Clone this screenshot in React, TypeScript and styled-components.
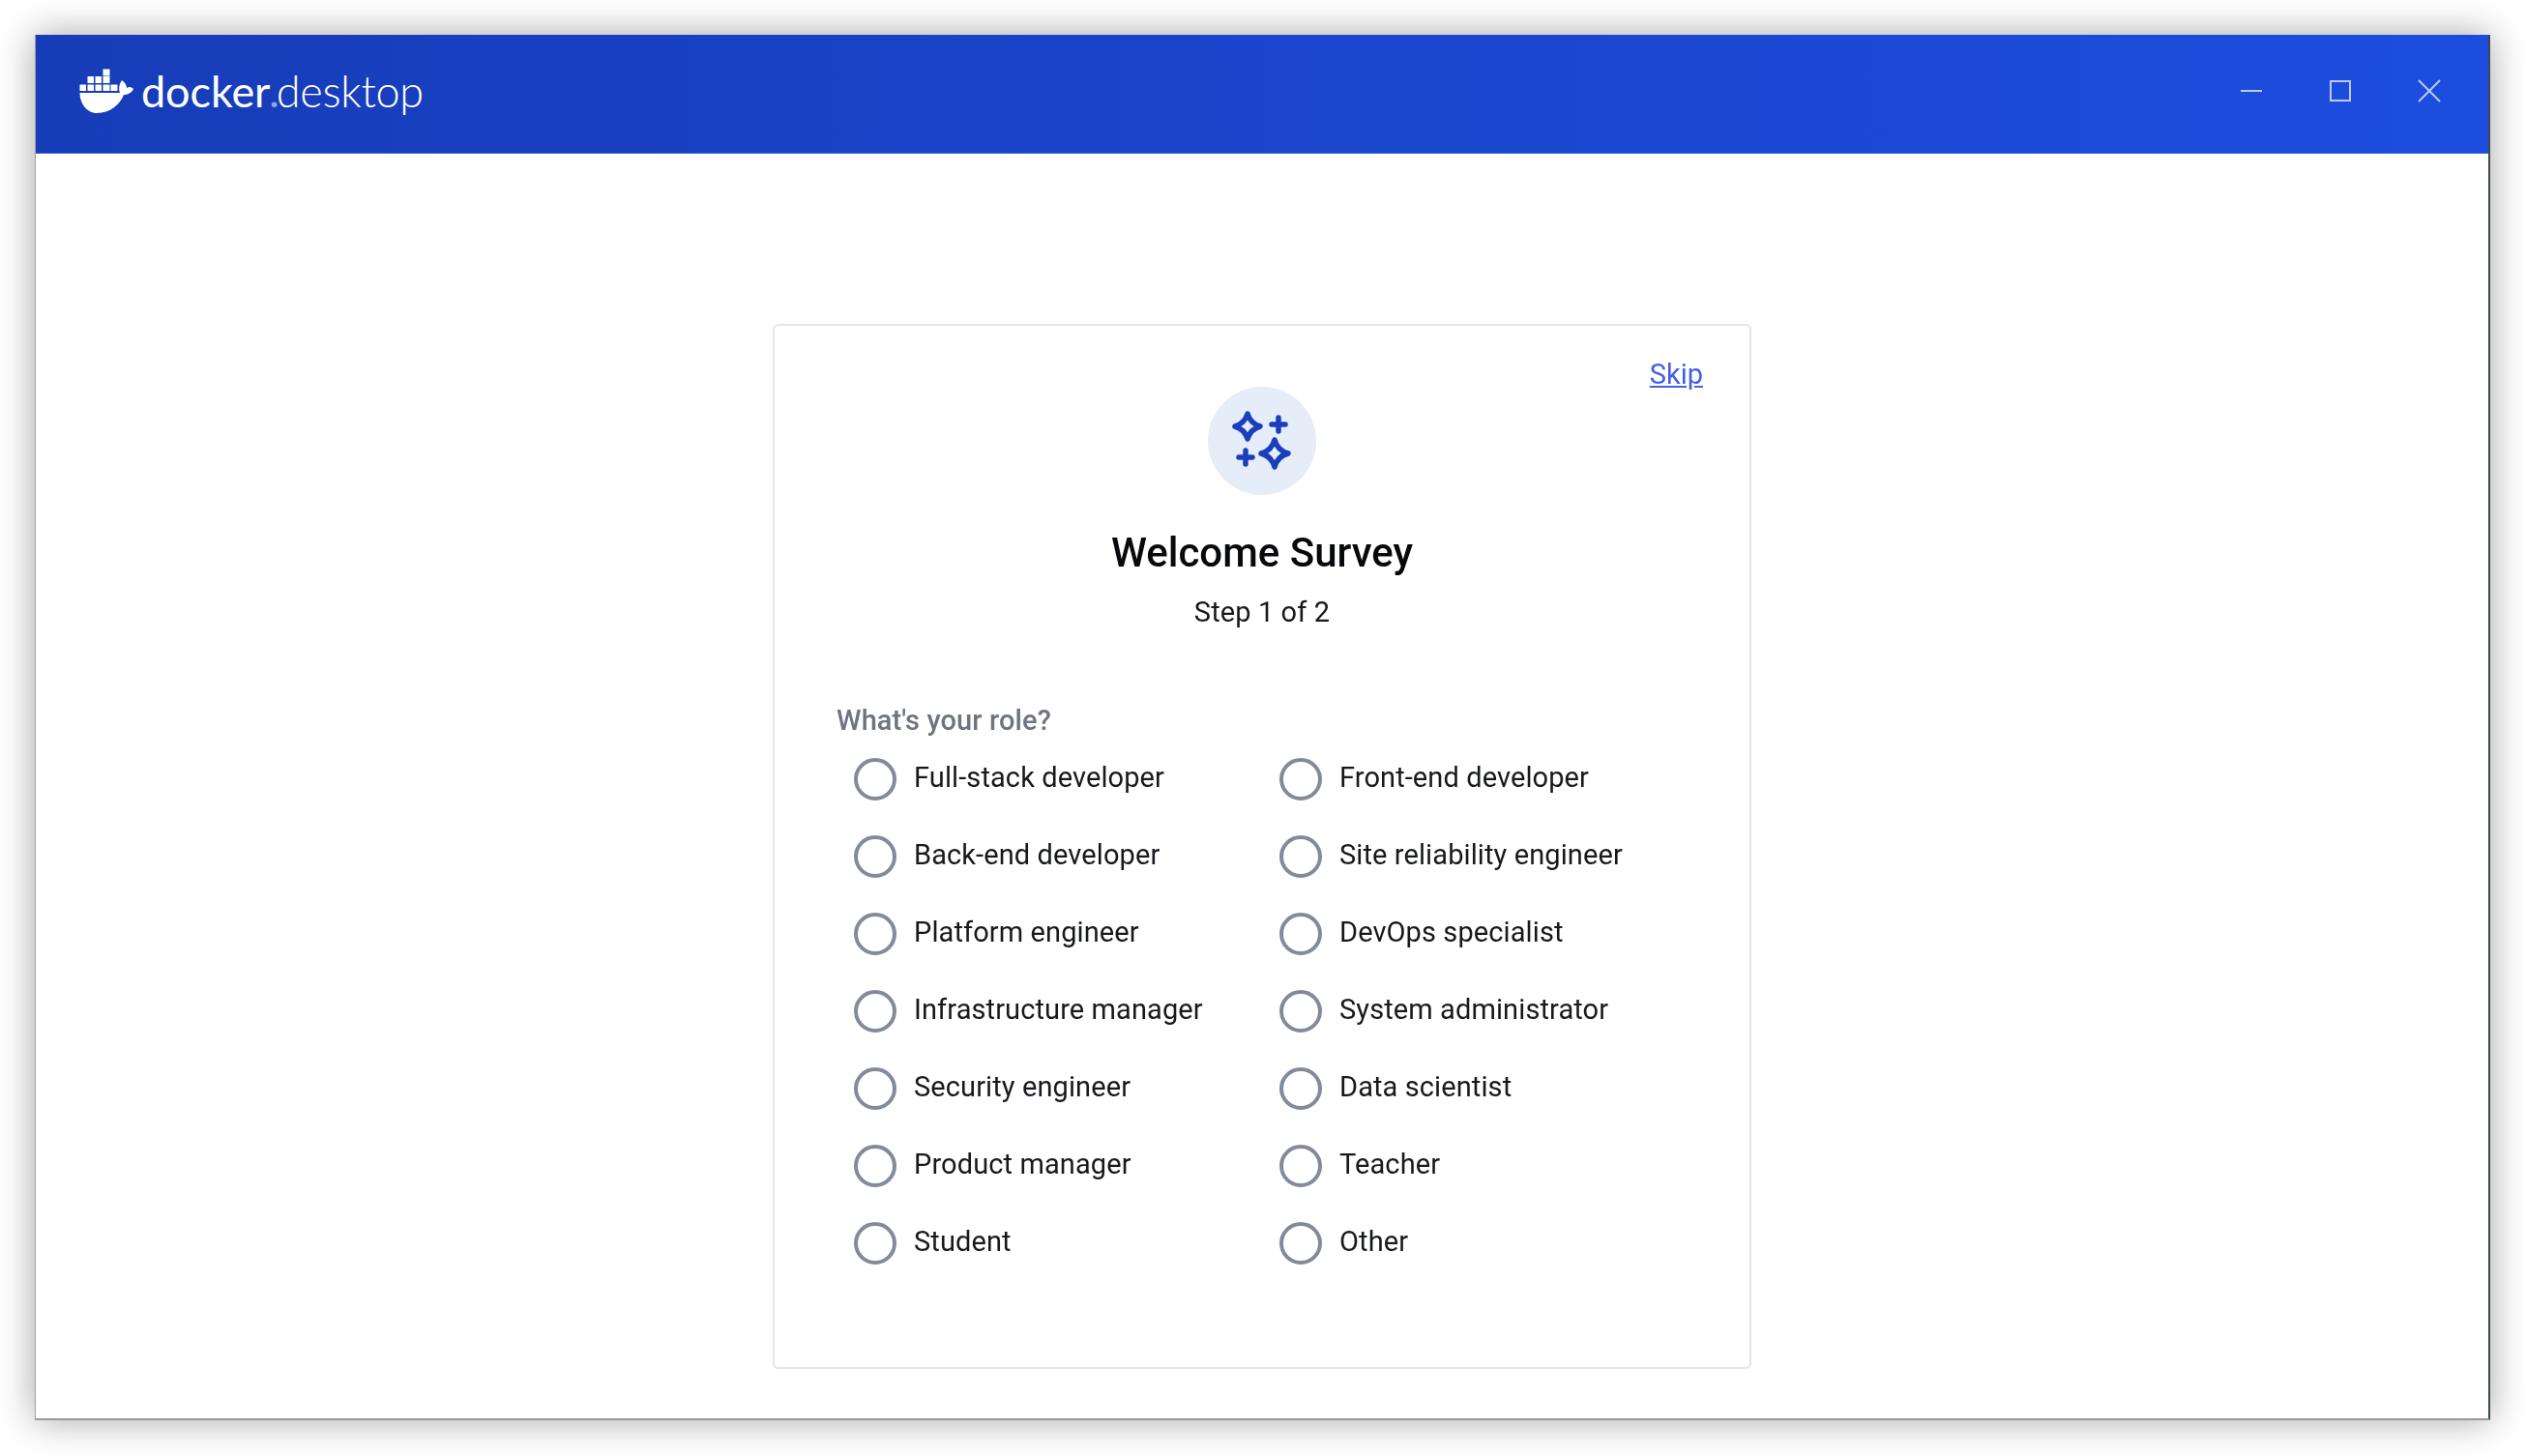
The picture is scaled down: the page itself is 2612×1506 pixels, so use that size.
import React from 'react';
import styled, { createGlobalStyle } from 'styled-components';

const GlobalStyle = createGlobalStyle`
  html, body {
    margin: 0;
    background: #fff;
    font-family: Roboto, "Liberation Sans", sans-serif;
  }
`;

const Page = styled.div`
  width: 2612px;
  height: 1506px;
  padding: 36px 37px 37px 36px;
  box-sizing: border-box;
  overflow: hidden;
`;

const AppWindow = styled.div`
  height: 100%;
  display: flex;
  flex-direction: column;
  box-sizing: border-box;
  background: #fff;
  border-left: 1px solid #a2a29d;
  border-right: 2px solid #3d4a4e;
  border-bottom: 2px solid #9a9a98;
  box-shadow: 0 0 36px rgba(0, 0, 0, 0.36);
  filter: blur(0.45px);
`;

const TitleBar = styled.header`
  height: 123px;
  box-sizing: border-box;
  flex: none;
  display: flex;
  align-items: center;
  justify-content: space-between;
  padding: 0 15px 6px 43px;
  background: linear-gradient(90deg, #173cb8 0%, #1d4ddf 100%);
  border-bottom: 1px solid #3f63d8;
`;

const Logo = styled.div`
  display: flex;
  align-items: center;
  gap: 6px;
  color: #fff;
`;

const Wordmark = styled.div`
  display: flex;
  align-items: baseline;
  font-family: Lato, sans-serif;
  font-size: 45px;
  line-height: 50px;
  letter-spacing: -0.1px;
`;

const WordDot = styled.span`
  color: #8ea6ee;
  margin: 0 -3px 0 -1px;
`;

const WordLight = styled.span`
  font-weight: 300;
  letter-spacing: -0.3px;
`;

const WindowControls = styled.div`
  display: flex;
`;

const ControlButton = styled.button`
  width: 92px;
  height: 40px;
  padding: 0;
  display: flex;
  align-items: center;
  justify-content: center;
  background: none;
  border: 0;
  color: #b9caf6;
`;

const Main = styled.main`
  flex: 1;
  display: flex;
  justify-content: center;
  padding-top: 176px;
`;

const Card = styled.section`
  position: relative;
  width: 1012px;
  height: 1081px;
  box-sizing: border-box;
  padding: 63px 64px 0;
  display: flex;
  flex-direction: column;
  align-items: center;
  border: 2px solid #e4e5ea;
  border-radius: 6px;
`;

const SkipLink = styled.a`
  position: absolute;
  top: 30px;
  right: 48px;
  font-size: 29px;
  line-height: 40px;
  color: #4560e2;
  text-decoration: underline;
`;

const IconCircle = styled.div`
  width: 112px;
  height: 112px;
  border-radius: 50%;
  background: #e5edf9;
  color: #1a3fbd;
  flex: none;
`;

const Title = styled.h1`
  margin: 36px 0 0;
  font-size: 42px;
  line-height: 48px;
  font-weight: 500;
  color: #08090c;
`;

const Step = styled.p`
  margin: 17px 0 0;
  font-size: 29px;
  line-height: 40px;
  letter-spacing: 0.1px;
  color: #17191e;
`;

const RoleLabel = styled.div`
  align-self: stretch;
  margin-top: 72px;
  font-size: 29px;
  line-height: 40px;
  font-weight: 500;
  letter-spacing: 0.1px;
  color: #6f7480;
`;

const RoleGrid = styled.div`
  align-self: stretch;
  margin-top: 18px;
  padding-left: 18px;
  display: grid;
  grid-template-columns: 440px 1fr;
  grid-auto-rows: 80px;
`;

const RoleOption = styled.label`
  display: flex;
  align-items: center;
  gap: 18px;
  height: 44px;
  font-size: 29px;
  line-height: 40px;
  letter-spacing: 0.1px;
  color: #17191e;
`;

const RadioMark = styled.span`
  width: 44px;
  height: 44px;
  box-sizing: border-box;
  flex: none;
  border: 4.5px solid #828b9c;
  border-radius: 50%;
  margin-top: 2px;
`;

const OptionText = styled.span`
  margin-top: -2px;
`;

const roles = [
  'Full-stack developer',
  'Front-end developer',
  'Back-end developer',
  'Site reliability engineer',
  'Platform engineer',
  'DevOps specialist',
  'Infrastructure manager',
  'System administrator',
  'Security engineer',
  'Data scientist',
  'Product manager',
  'Teacher',
  'Student',
  'Other',
];

function DockerWhale() {
  return (
    <svg width="60" height="50" viewBox="80 68 60 50" fill="currentColor">
      <rect x="106.5" y="70.5" width="7" height="7" />
      <rect x="90.5" y="78" width="6.5" height="7" />
      <rect x="98.5" y="78" width="6.5" height="7" />
      <rect x="106.5" y="78" width="7" height="7" />
      <rect x="82.5" y="86.5" width="6.5" height="6.5" />
      <rect x="90.5" y="86.5" width="6.5" height="6.5" />
      <rect x="98.5" y="86.5" width="6.5" height="6.5" />
      <rect x="106.5" y="86.5" width="7" height="6.5" />
      <rect x="114.5" y="86.5" width="7" height="6.5" />
      <path d="M82.5 95 H124 C122 90 124 85 126 82 C129 84 131 87 131 90 C134 88 136 89 138 91 C136 95 132 97 128 97 C124 107 114 116 100 116 C90 116 82.5 106 82.5 95 Z" />
    </svg>
  );
}

function SparkleIcon() {
  return (
    <svg width="112" height="112" viewBox="0 0 112 112" fill="none" stroke="currentColor" strokeWidth="5.5" strokeLinecap="round" strokeLinejoin="round">
      <path d="M41 28 Q44 38 54 41 Q44 44 41 54 Q38 44 28 41 Q38 38 41 28 Z" />
      <path d="M69 55 Q72 66 83 69 Q72 72 69 83 Q66 72 55 69 Q66 66 69 55 Z" />
      <path d="M73 32 V46 M66 39 H80" />
      <path d="M39 66 V80 M32 73 H46" />
    </svg>
  );
}

export default function App() {
  return (
    <Page>
      <GlobalStyle />
      <AppWindow>
        <TitleBar>
          <Logo>
            <DockerWhale />
            <Wordmark>
              docker<WordDot>.</WordDot>
              <WordLight>desktop</WordLight>
            </Wordmark>
          </Logo>
          <WindowControls>
            <ControlButton aria-label="Minimize">
              <svg width="22" height="22" viewBox="0 0 22 22" stroke="currentColor" strokeWidth="2"><path d="M0 11 H22" /></svg>
            </ControlButton>
            <ControlButton aria-label="Maximize">
              <svg width="22" height="22" viewBox="0 0 22 22" fill="none" stroke="currentColor" strokeWidth="2"><rect x="1" y="1" width="20" height="20" /></svg>
            </ControlButton>
            <ControlButton aria-label="Close">
              <svg width="24" height="24" viewBox="0 0 24 24" stroke="currentColor" strokeWidth="2"><path d="M1 1 L23 23 M23 1 L1 23" /></svg>
            </ControlButton>
          </WindowControls>
        </TitleBar>
        <Main>
          <Card>
            <SkipLink href="#">Skip</SkipLink>
            <IconCircle><SparkleIcon /></IconCircle>
            <Title>Welcome Survey</Title>
            <Step>Step 1 of 2</Step>
            <RoleLabel>What's your role?</RoleLabel>
            <RoleGrid>
              {roles.map(role => (
                <RoleOption key={role}>
                  <RadioMark />
                  <OptionText>{role}</OptionText>
                </RoleOption>
              ))}
            </RoleGrid>
          </Card>
        </Main>
      </AppWindow>
    </Page>
  );
}
